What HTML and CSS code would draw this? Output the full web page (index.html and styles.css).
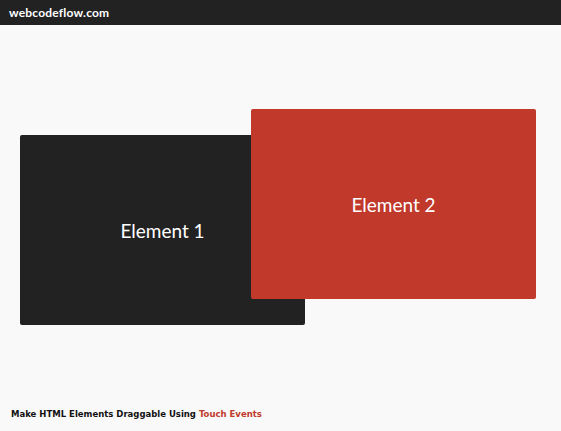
FILE: index.html
```html
<!DOCTYPE html>
<html>
<head>
<meta charset="utf-8">
<link rel="stylesheet" href="styles.css">
</head>
<body>
<header class="topbar"><span class="brand">webcodeflow.com</span></header>
<main class="canvas">
  <div class="box box-dark" style="left:20px;top:110px;">Element 1</div>
  <div class="box box-red" style="left:251px;top:84px;">Element 2</div>
</main>
<footer class="caption">Make HTML Elements Draggable Using <span class="accent">Touch Events</span></footer>
</body>
</html>
```
FILE: styles.css
```css
html, body { margin: 0; padding: 0; }
body {
  width: 561px;
  height: 431px;
  background: #f9f9f9;
  font-family: Lato, "Liberation Sans", sans-serif;
  display: flex;
  flex-direction: column;
  overflow: hidden;
}
.topbar {
  height: 25px;
  background: #222222;
  display: flex;
  align-items: center;
  padding-left: 9px;
  flex-shrink: 0;
}
.brand {
  color: #ffffff;
  font-weight: bold;
  font-size: 12px;
  letter-spacing: 0.2px;
}
.canvas {
  position: relative;
  flex: 1;
}
.box {
  position: absolute;
  width: 285px;
  height: 190px;
  border-radius: 2px;
  display: flex;
  align-items: center;
  justify-content: center;
  color: #ffffff;
  font-size: 19px;
}
.box-dark { background: #222222; }
.box-red { background: #c0392b; }
.caption {
  height: 32px;
  box-sizing: border-box;
  padding: 9px 0 0 11px;
  line-height: 12px;
  font-family: "DejaVu Sans", "Liberation Sans", sans-serif;
  font-size: 8.5px;
  font-weight: bold;
  color: #111;
  flex-shrink: 0;
}
.accent { color: #c0392b; }
```
